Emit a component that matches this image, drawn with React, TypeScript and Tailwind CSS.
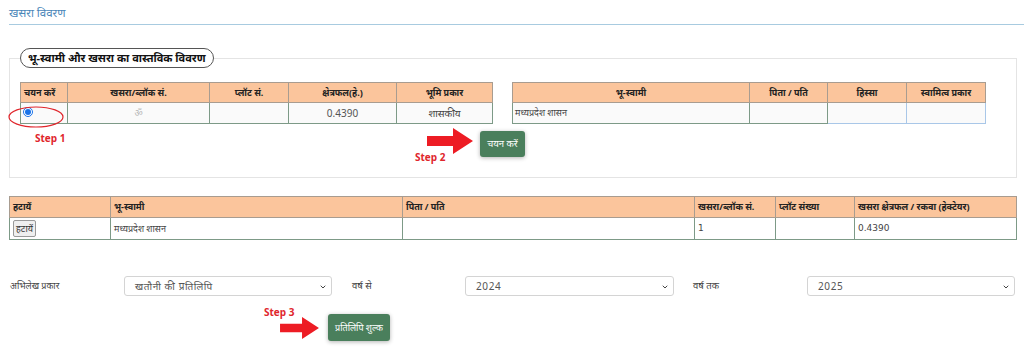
import { ChevronDown } from "lucide-react";

const font = "font-['Noto_Sans','Liberation_Sans',sans-serif]";

function Arrow({ className }: { className: string }) {
  return (
    <svg viewBox="0 0 46 26" className={className}>
      <polygon points="0,8 26,8 26,0 46,13 26,26 26,18 0,18" fill="#ed1c24" />
    </svg>
  );
}

function Select({ value, width }: { value: string; width: string }) {
  return (
    <div className={`relative ${width} h-[20px] rounded-[3px] border border-[#d4d4d4] bg-white`}>
      <div className="pl-[10px] text-[10px] leading-[18px] text-[#555] tracking-[0.6px]">{value}</div>
      <ChevronDown className="absolute right-[4px] top-[6px] w-[8px] h-[8px] text-[#444]" strokeWidth={3} />
    </div>
  );
}

export default function App() {
  const th = "border border-[#a89c90] bg-[#fbc59c] font-bold text-[9px] h-[20px] text-[#222]";
  const td = "border border-[#7d9a87] h-[21px] text-[9px] text-[#444] bg-[#fafafa]";
  const th2 = "border border-[#a89c90] bg-[#fbc59c] font-bold text-[9px] h-[21px] text-left pl-[3px] text-[#222]";
  const td2 = "border border-[#7d9a87] h-[22px] text-[9px] text-[#444] text-left pl-[3px]";

  return (
    <div className={`w-[1024px] h-[350px] overflow-hidden bg-white ${font}`}>
      <div className="ml-[9px] pt-[4px] pb-[2px] h-[25px] border-b border-[#a8cbe0] text-[11.5px] text-[#4a86b8]">
        खसरा विवरण
      </div>

      <fieldset className="ml-[9px] mt-[23px] w-[1008px] h-[130px] border border-[#e4e4e4] pl-[10px]">
        <legend className="px-[7px] h-[20px] rounded-full border border-[#555] text-[11px] font-bold leading-[18px] text-[#111]">
          भू-स्वामी और खसरा का वास्तविक विवरण
        </legend>

        <div className="flex gap-[19px] mt-[14px]">
          <div className="relative">
            <table className="border-collapse w-[473px] text-center">
              <thead>
                <tr>
                  <th className={`${th} w-[47px] text-left pl-[3px]`}>चयन करें</th>
                  <th className={`${th} w-[142px]`}>खसरा/ब्लॉक सं.</th>
                  <th className={`${th} w-[79px]`}>प्लॉट सं.</th>
                  <th className={`${th} w-[108px]`}>क्षेत्रफल(हे.)</th>
                  <th className={th}>भूमि प्रकार</th>
                </tr>
              </thead>
              <tbody>
                <tr>
                  <td className={`${td} text-left pl-[2px] align-top pt-[4px]`}>
                    <input type="radio" defaultChecked className="w-[10px] h-[10px] accent-[#1a73e8]" />
                  </td>
                  <td className={`${td} text-[#b5b5b5]`}>ॐ</td>
                  <td className={td}></td>
                  <td className={`${td} text-[10px] text-[#555]`}>0.4390</td>
                  <td className={`${td} text-[10px]`}>शासकीय</td>
                </tr>
              </tbody>
            </table>
            <svg viewBox="0 0 56 22" className="absolute left-[-12px] top-[24px] w-[56px] h-[22px]">
              <ellipse cx="28" cy="11" rx="27" ry="10" fill="none" stroke="#e0262c" strokeWidth="1.2" />
            </svg>
          </div>

          <table className="border-collapse w-[474px] text-center">
            <thead>
              <tr>
                <th className={`${th} w-[237px]`}>भू-स्वामी</th>
                <th className={`${th} w-[78px]`}>पिता / पति</th>
                <th className={`${th} w-[79px]`}>हिस्सा</th>
                <th className={th}>स्वामित्व प्रकार</th>
              </tr>
            </thead>
            <tbody>
              <tr>
                <td className={`${td} text-left pl-[2px]`}>मध्यप्रदेश शासन</td>
                <td className={td}></td>
                <td className="border border-[#a9c7e8] bg-[#fafafa]"></td>
                <td className="border border-[#a9c7e8] bg-[#fafafa]"></td>
              </tr>
            </tbody>
          </table>
        </div>

        <div className="relative mt-[5px] h-[26px]">
          <div className="absolute left-[15px] top-[2px] text-[10px] font-bold text-[#e0262c] font-['Open_Sans',sans-serif]">Step 1</div>
          <Arrow className="absolute left-[407px] top-[-1px] w-[46px] h-[26px]" />
          <div className="absolute left-[395px] top-[21px] text-[10px] font-bold text-[#e0262c] font-['Open_Sans',sans-serif]">Step 2</div>
          <button className="ml-[460px] h-[26px] w-[45px] rounded-[3px] bg-[#4a7f5c] text-white text-[9.5px] shadow-[0_1px_4px_rgba(0,0,0,0.3)]">
            चयन करें
          </button>
        </div>
      </fieldset>

      <table className="ml-[9px] mt-[18px] w-[1008px] border-collapse">
        <thead>
          <tr>
            <th className={`${th2} w-[101px]`}>हटायें</th>
            <th className={`${th2} w-[292px]`}>भू-स्वामी</th>
            <th className={`${th2} w-[292px]`}>पिता / पति</th>
            <th className={`${th2} w-[81px]`}>खसरा/ब्लॉक सं.</th>
            <th className={`${th2} w-[79px]`}>प्लॉट संख्या</th>
            <th className={th2}>खसरा क्षेत्रफल / रकवा (हेक्टेयर)</th>
          </tr>
        </thead>
        <tbody>
          <tr>
            <td className={`${td2} pl-[1px]`}>
              <button className="h-[17px] w-[23px] border border-[#999] rounded-[2px] bg-[#efefef] text-[9px] text-[#333] leading-[15px]">
                हटायें
              </button>
            </td>
            <td className={td2}>मध्यप्रदेश शासन</td>
            <td className={td2}></td>
            <td className={`${td2} font-['DejaVu_Sans',sans-serif]`}>1</td>
            <td className={td2}></td>
            <td className={`${td2} font-['DejaVu_Sans',sans-serif]`}>0.4390</td>
          </tr>
        </tbody>
      </table>

      <div className="flex items-center mt-[36px] ml-[10px]">
        <div className="w-[114px] text-[9px] text-[#444]">अभिलेख प्रकार</div>
        <Select value="खतौनी की प्रतिलिपि" width="w-[208px]" />
        <div className="w-[133px] pl-[20px] text-[9.5px] text-[#444]">वर्ष से</div>
        <Select value="2024" width="w-[209px]" />
        <div className="w-[133px] pl-[19px] text-[9.5px] text-[#444]">वर्ष तक</div>
        <Select value="2025" width="w-[208px]" />
      </div>

      <div className="relative mt-[17px] h-[27px]">
        <div className="absolute left-[264px] top-[-8px] text-[10px] font-bold text-[#e0262c] font-['Open_Sans',sans-serif]">Step 3</div>
        <Arrow className="absolute left-[277px] top-[4px] w-[45px] h-[22px]" />
        <button className="ml-[328px] h-[27px] w-[62px] rounded-[3px] bg-[#4a7f5c] text-white text-[9px] shadow-[0_1px_4px_rgba(0,0,0,0.3)]">
          प्रतिलिपि शुल्क
        </button>
      </div>
    </div>
  );
}
